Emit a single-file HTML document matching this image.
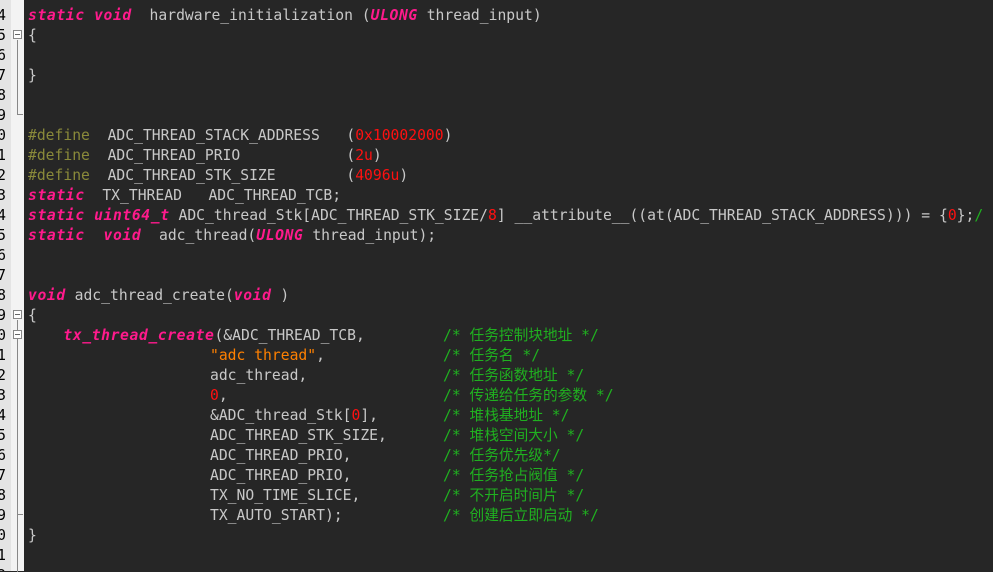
<!DOCTYPE html>
<html><head><meta charset="utf-8"><style>
html,body{margin:0;padding:0;}
body{width:993px;height:571px;overflow:hidden;background:#262626;position:relative;font-family:"DejaVu Sans Mono","Liberation Mono","Noto Sans CJK SC",monospace;font-size:14.7px;}
#gut{position:absolute;left:0;top:0;width:11px;height:571px;background:#e4e4e4;overflow:hidden;}
#fold{position:absolute;left:11px;top:0;width:13px;height:571px;background:#f3f3f3;}
.n{position:absolute;left:-24px;width:30px;text-align:right;color:#000;height:20px;line-height:20px;font-family:"DejaVu Sans Mono",monospace;font-size:14.7px;}
.l{position:absolute;left:28px;height:20px;line-height:20px;white-space:pre;color:#c8c8c8;}
.a{left:210px;}
.k{color:#ff1a8c;font-weight:bold;font-style:italic;letter-spacing:0.6px;}
.d{color:#8a8a3a;}
.r{color:#ff1010;}
.s{color:#ff8000;}
.c{color:#20b020;font-family:"DejaVu Sans Mono","Noto Sans CJK SC",monospace;position:absolute;left:443px;height:20px;line-height:20px;white-space:pre;}
.b{position:absolute;left:13px;width:9px;height:9px;border:1px solid #888;background:#fff;box-sizing:border-box;}
.b:after{content:"";position:absolute;left:1px;top:3px;width:5px;height:1px;background:#666;}
.v{position:absolute;left:17px;width:1px;background:#888;}
.h{position:absolute;left:17px;height:1px;width:6px;background:#888;}
</style></head><body>
<div id="gut">
<div class="n" style="top:6px">4</div><div class="n" style="top:26px">5</div><div class="n" style="top:46px">6</div><div class="n" style="top:66px">7</div><div class="n" style="top:86px">8</div><div class="n" style="top:106px">9</div><div class="n" style="top:126px">0</div><div class="n" style="top:146px">1</div><div class="n" style="top:166px">2</div><div class="n" style="top:186px">3</div><div class="n" style="top:206px">4</div><div class="n" style="top:226px">5</div><div class="n" style="top:246px">6</div><div class="n" style="top:266px">7</div><div class="n" style="top:286px">8</div><div class="n" style="top:306px">9</div><div class="n" style="top:326px">0</div><div class="n" style="top:346px">1</div><div class="n" style="top:366px">2</div><div class="n" style="top:386px">3</div><div class="n" style="top:406px">4</div><div class="n" style="top:426px">5</div><div class="n" style="top:446px">6</div><div class="n" style="top:466px">7</div><div class="n" style="top:486px">8</div><div class="n" style="top:506px">9</div><div class="n" style="top:526px">0</div><div class="n" style="top:546px">1</div><div class="n" style="top:566px">2</div>
</div>
<div id="fold"></div>
<div class="v" style="top:40px;height:74px"></div><div class="h" style="top:114px"></div>
<div class="b" style="top:30px"></div>
<div class="v" style="top:320px;height:252px"></div>
<div class="b" style="top:310px"></div>
<div class="b" style="top:330px"></div>
<div class="h" style="top:514px"></div>

<div class="l" style="top:6px"><span class="k">static void</span>  hardware_initialization (<span class="k">ULONG</span> thread_input)</div>
<div class="l" style="top:26px">{</div>
<div class="l" style="top:66px">}</div>
<div class="l" style="top:126px"><span class="d">#define</span>  ADC_THREAD_STACK_ADDRESS   (<span class="r">0x10002000</span>)</div>
<div class="l" style="top:146px"><span class="d">#define</span>  ADC_THREAD_PRIO            (<span class="r">2u</span>)</div>
<div class="l" style="top:166px"><span class="d">#define</span>  ADC_THREAD_STK_SIZE        (<span class="r">4096u</span>)</div>
<div class="l" style="top:186px"><span class="k">static</span>  TX_THREAD   ADC_THREAD_TCB;</div>
<div class="l" style="top:206px"><span class="k">static uint64_t</span> ADC_thread_Stk[ADC_THREAD_STK_SIZE/<span class="r">8</span>] __attribute__((at(ADC_THREAD_STACK_ADDRESS))) = {<span class="r">0</span>};<span style="color:#20b020">/</span></div>
<div class="l" style="top:226px"><span class="k">static  void</span>  adc_thread(<span class="k">ULONG</span> thread_input);</div>
<div class="l" style="top:286px"><span class="k">void</span> adc_thread_create(<span class="k">void</span> )</div>
<div class="l" style="top:306px">{</div>
<div class="l" style="top:326px">    <span class="k">tx_thread_create</span>(&amp;ADC_THREAD_TCB,</div>
<div class="l a" style="top:346px"><span class="s">"adc thread"</span>,</div>
<div class="l a" style="top:366px">adc_thread,</div>
<div class="l a" style="top:386px"><span class="r">0</span>,</div>
<div class="l a" style="top:406px">&amp;ADC_thread_Stk[<span class="r">0</span>],</div>
<div class="l a" style="top:426px">ADC_THREAD_STK_SIZE,</div>
<div class="l a" style="top:446px">ADC_THREAD_PRIO,</div>
<div class="l a" style="top:466px">ADC_THREAD_PRIO,</div>
<div class="l a" style="top:486px">TX_NO_TIME_SLICE,</div>
<div class="l a" style="top:506px">TX_AUTO_START);</div>
<div class="c" style="top:326px">/* 任务控制块地址 */</div>
<div class="c" style="top:346px">/* 任务名 */</div>
<div class="c" style="top:366px">/* 任务函数地址 */</div>
<div class="c" style="top:386px">/* 传递给任务的参数 */</div>
<div class="c" style="top:406px">/* 堆栈基地址 */</div>
<div class="c" style="top:426px">/* 堆栈空间大小 */</div>
<div class="c" style="top:446px">/* 任务优先级*/</div>
<div class="c" style="top:466px">/* 任务抢占阀值 */</div>
<div class="c" style="top:486px">/* 不开启时间片 */</div>
<div class="c" style="top:506px">/* 创建后立即启动 */</div>
<div class="l" style="top:526px">}</div>
</body></html>
